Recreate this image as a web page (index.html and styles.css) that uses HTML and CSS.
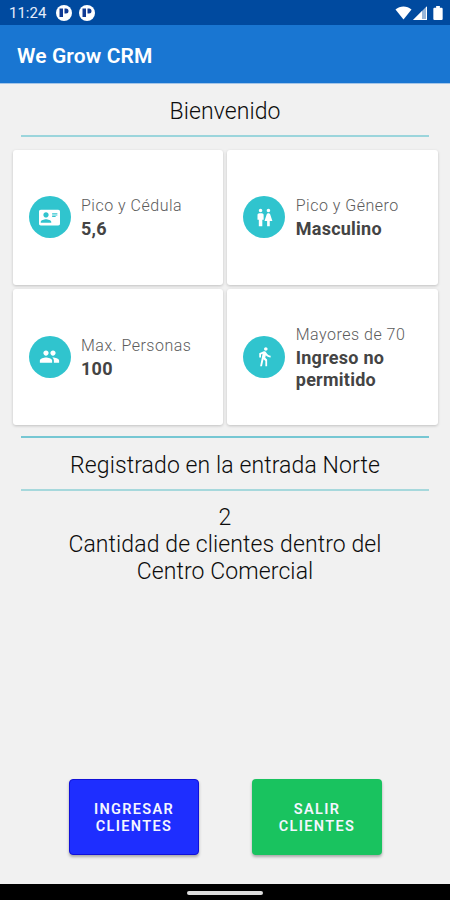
FILE: index.html
```html
<!DOCTYPE html>
<html lang="es">
<head>
  <meta charset="UTF-8">
  <title>We Grow CRM</title>
  <link rel="stylesheet" href="styles.css">
</head>
<body>
  <!-- Barra de estado -->
  <div class="status-bar">
    <span class="time">11:24</span>
    <svg class="notif" viewBox="0 0 16 16">
      <circle cx="8" cy="8" r="8" fill="#fff"/>
      <path d="M3.500 3.500h3.500v8.500h-3.500zM8.500 3.500h1.500a2.500 2.500 0 0 1 0 5H8.500z" fill="#103a94"/>
    </svg>
    <svg class="notif" viewBox="0 0 16 16">
      <circle cx="8" cy="8" r="8" fill="#fff"/>
      <path d="M3.500 3.500h3.500v8.500h-3.500zM8.500 3.500h1.500a2.500 2.500 0 0 1 0 5H8.500z" fill="#103a94"/>
    </svg>
    <div class="system-icons">
      <svg width="17" height="14" viewBox="0 0 17 14"><path d="M0.500 3.500C5 -0.600 12 -0.600 16.500 3.500L8.500 13.500z" fill="#fff"/></svg>
      <svg width="14" height="14" viewBox="0 0 14 14"><path d="M14 0v14H0z" fill="#fff" opacity=".6"/><path d="M9 5v9H0zM13 1h1v13h-1zM9 13h5v1H9z" fill="#fff"/></svg>
      <svg class="battery" width="10" height="14" viewBox="0 0 10 15"><path d="M3 0h4v2h1.800q1.200 0 1.200 1.200v10.600q0 1.200-1.200 1.200H1.200Q0 15 0 13.800V3.200Q0 2 1.200 2H3z" fill="#fff"/></svg>
    </div>
  </div>

  <header class="app-bar">
    <h1>We Grow CRM</h1>
  </header>

  <main>
    <h2 class="welcome">Bienvenido</h2>

    <!-- Tarjetas con las restricciones del día -->
    <div class="cards">
      <div class="card">
        <div class="icon">
          <svg viewBox="0 0 24 24"><path d="M22 3H2C.9 3 0 3.900 0 5v14c0 1.100.9 2 2 2h20c1.100 0 1.990-.9 1.990-2L24 5c0-1.100-.9-2-2-2zM8 6c1.660 0 3 1.340 3 3s-1.340 3-3 3-3-1.340-3-3 1.340-3 3-3zm6 12H2v-1c0-2 4-3.100 6-3.100s6 1.100 6 3.100v1zM15 7h6v1h-6zM15 8.700h6v1h-6zM15 10.300h4v1h-4z" fill-rule="evenodd"/></svg>
        </div>
        <div class="info">
          <div class="label">Pico y Cédula</div>
          <div class="value">5,6</div>
        </div>
      </div>
      <div class="card">
        <div class="icon">
          <svg viewBox="0 0 24 24"><path d="M5.500 22v-7.500H4V9c0-1.100.9-2 2-2h3c1.100 0 2 .9 2 2v5.500H9.500V22h-4zM18 22v-6h3l-2.540-7.630C18.180 7.550 17.420 7 16.560 7h-.12c-.86 0-1.630.55-1.900 1.370L12 16h3v6h3zM7.500 6c1.110 0 2-.89 2-2s-.89-2-2-2-2 .89-2 2 .89 2 2 2zm9 0c1.110 0 2-.89 2-2s-.89-2-2-2-2 .89-2 2 .89 2 2 2z"/></svg>
        </div>
        <div class="info">
          <div class="label">Pico y Género</div>
          <div class="value">Masculino</div>
        </div>
      </div>
      <div class="card">
        <div class="icon">
          <svg viewBox="0 0 24 24"><path d="M16 11c1.660 0 2.990-1.340 2.990-3S17.660 5 16 5c-1.660 0-3 1.340-3 3s1.340 3 3 3zm-8 0c1.660 0 2.990-1.340 2.990-3S9.660 5 8 5C6.340 5 5 6.340 5 8s1.340 3 3 3zm0 2c-2.330 0-7 1.170-7 3.500V19h14v-2.500c0-2.330-4.670-3.500-7-3.500zm8 0c-.29 0-.62.020-.97.050 1.160.84 1.970 1.970 1.970 3.450V19h6v-2.500c0-2.330-4.670-3.500-7-3.500z"/></svg>
        </div>
        <div class="info">
          <div class="label">Max. Personas</div>
          <div class="value">100</div>
        </div>
      </div>
      <div class="card">
        <div class="icon">
          <svg viewBox="0 0 24 24"><path d="M13.500 5.500c1.100 0 2-.9 2-2s-.9-2-2-2-2 .9-2 2 .9 2 2 2zM9.800 8.900L7 23h2.100l1.800-8 2.100 2v6h2v-7.500l-2.100-2 .6-3C14.800 12 16.800 13 19 13v-2c-1.900 0-3.500-1-4.300-2.400l-1-1.600c-.4-.6-1-1-1.700-1-.3 0-.5.1-.8.1L6 8.300V13h2V9.600l1.800-.7"/></svg>
        </div>
        <div class="info">
          <div class="label">Mayores de 70</div>
          <div class="value">Ingreso no permitido</div>
        </div>
      </div>
    </div>

    <h2 class="entrance">Registrado en la entrada Norte</h2>

    <p class="count">2<br>Cantidad de clientes dentro del Centro Comercial</p>

    <div class="buttons">
      <button type="button" class="enter">Ingresar clientes</button>
      <button type="button" class="exit">Salir clientes</button>
    </div>
  </main>

  <div class="nav-bar"><span class="handle"></span></div>
</body>
</html>
```
FILE: styles.css
```css
* {
  box-sizing: border-box;
}

body {
  margin: 0;
  height: 900px;
  display: flex;
  flex-direction: column;
  overflow: hidden;
  background: #f1f1f1;
  font-family: Roboto, sans-serif;
}

/* Barra de estado */
.status-bar {
  height: 25px;
  padding: 1px 7px 0 9px;
  display: flex;
  align-items: center;
  background: #004a9f;
  color: #e4ecfa;
}

.time {
  width: 47px;
  font-size: 15px;
}

.notif {
  width: 16px;
  height: 16px;
  margin-right: 7px;
}

.system-icons {
  margin-left: auto;
  display: flex;
  align-items: center;
  gap: 1px;
}

.battery {
  margin-left: 5px;
}

.app-bar {
  height: 59px;
  padding: 3px 17px 0;
  display: flex;
  align-items: center;
  background: #1976d2;
  border-bottom: 1px solid #a5c6e8;
}

h1 {
  margin: 0;
  color: #fff;
  font-size: 21px;
  font-weight: 600;
  letter-spacing: 0.1px;
}

main {
  flex: 1;
  display: flex;
  flex-direction: column;
}

h2,
.count {
  margin: 0;
  color: #0c0c0c;
  font-size: 23px;
  font-weight: 350;
  line-height: 27px;
  letter-spacing: 0.1px;
  text-align: center;
}

.welcome {
  margin: 0 21px;
  padding: 14px 0 10px;
  border-bottom: 2px solid #9bd5dc;
}

/* Tarjetas */
.cards {
  margin: 12.5px 12px 0 12.5px;
  display: grid;
  grid-template-columns: 1fr 1fr;
  grid-auto-rows: 135.5px;
  gap: 4px;
}

.card {
  padding: 0 16px;
  display: flex;
  align-items: center;
  gap: 10.5px;
  background: #fff;
  border-radius: 3px;
  box-shadow: 0 1px 3px rgba(0, 0, 0, 0.2);
}

.icon {
  flex: none;
  width: 42px;
  height: 42px;
  display: flex;
  align-items: center;
  justify-content: center;
  background: #30c4ce;
  border-radius: 50%;
}

.icon svg {
  width: 21px;
  height: 21px;
  fill: #fff;
}

.label {
  color: #5c5c5c;
  font-size: 16px;
  font-weight: 300;
  line-height: 24px;
  letter-spacing: 0.5px;
}

.value {
  color: #444;
  font-size: 18px;
  font-weight: 700;
  line-height: 22px;
  letter-spacing: 0.25px;
}

.entrance {
  margin: 11.5px 21px 0;
  padding: 14px 0 10px;
  border-top: 2px solid #76c7d3;
  border-bottom: 2px solid #a6d8dc;
}

.count {
  padding: 13px 60px 0;
}

/* Botones de ingreso y salida */
.buttons {
  margin: auto 68px 29px 69px;
  display: flex;
  justify-content: space-between;
}

button {
  width: 130px;
  height: 76px;
  padding: 2px 20px 0;
  border: 0;
  border-radius: 4px;
  box-shadow: 0 2px 3px rgba(0, 0, 0, 0.3);
  color: #f4f6ff;
  font-family: inherit;
  font-size: 14.5px;
  font-weight: 600;
  line-height: 17px;
  letter-spacing: 1.35px;
  text-transform: uppercase;
}

.enter {
  background: #1e2eff;
  border: 1px solid #1010d8;
}

.exit {
  background: #19c35f;
}

.nav-bar {
  height: 16px;
  padding-top: 2px;
  display: flex;
  align-items: center;
  justify-content: center;
  background: #000;
}

.handle {
  width: 76px;
  height: 4px;
  background: #ddd;
  border-radius: 2px;
}
```
